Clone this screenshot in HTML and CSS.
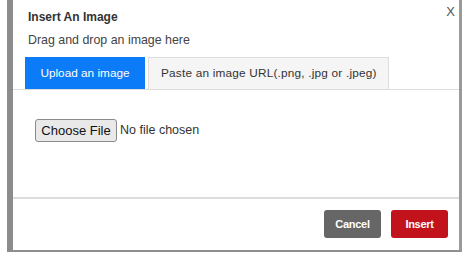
FILE: index.html
```html
<!DOCTYPE html>
<html>
<head>
<meta charset="utf-8">
<link rel="stylesheet" href="styles.css">
</head>
<body>
<div class="modal">
  <div class="header">
    <div class="title">Insert An Image</div>
    <div class="subtitle">Drag and drop an image here</div>
    <span class="close">X</span>
  </div>
  <div class="tabs">
    <div class="tab active">Upload an image</div>
    <div class="tab url">Paste an image URL(.png, .jpg or .jpeg)</div>
  </div>
  <div class="body">
    <button class="file-btn">Choose File</button>
    <span class="file-name">No file chosen</span>
  </div>
  <div class="footer">
    <button class="btn cancel">Cancel</button>
    <button class="btn insert">Insert</button>
  </div>
</div>
</body>
</html>
```
FILE: styles.css
```css
html, body {
  margin: 0;
  padding: 0;
  background: #fff;
}
body {
  font-family: "Liberation Sans", Arial, sans-serif;
  color: #333;
  width: 470px;
  height: 258px;
  overflow: hidden;
}
.modal {
  position: relative;
  margin-left: 7px;
  width: 446px;
  height: 250px;
  background: #fff;
  border-left: 6px solid #8c8c8c;
  border-right: 3px solid #9a9a9a;
  border-bottom: 2px solid #8f8f8f;
  display: flex;
  flex-direction: column;
}
.header {
  padding: 9px 15px 0 15px;
}
.title {
  font-size: 12px;
  font-weight: bold;
  line-height: 16px;
  color: #333;
}
.subtitle {
  font-size: 12.4px;
  line-height: 16px;
  margin-top: 7px;
  color: #444;
}
.close {
  position: absolute;
  top: 4px;
  right: 4px;
  font-size: 13px;
  color: #555;
}
.tabs {
  display: flex;
  gap: 3px;
  margin-top: 9px;
  padding-left: 12px;
  border-bottom: 1px solid #ddd;
}
.tab {
  height: 31px;
  line-height: 31px;
  font-size: 11.8px;
  padding: 0 12px;
  border: 1px solid #ddd;
  border-bottom: none;
  background: #f5f5f5;
  color: #333;
  white-space: nowrap;
}
.tab.url {
  width: 215px;
  letter-spacing: 0.2px;
}
.tab.active {
  background: #0b7bf7;
  border-color: #0b7bf7;
  color: #fff;
  width: 94px;
  text-align: center;
}
.body {
  flex: 1;
  display: flex;
  align-items: flex-start;
  padding: 29px 0 0 22px;
  border-bottom: 2px solid #ddd;
}
.file-btn {
  font-family: "Liberation Sans", Arial, sans-serif;
  font-size: 13px;
  height: 23px;
  width: 82px;
  padding: 0;
  color: #111;
  background: #e9e9e9;
  border: 1px solid #8a8a8a;
  border-radius: 3px;
}
.file-name {
  font-size: 12.5px;
  line-height: 23px;
  margin-left: 3px;
  color: #333;
}
.footer {
  height: 51px;
  display: flex;
  justify-content: flex-end;
  align-items: flex-start;
  gap: 10px;
  padding: 11px 11px 0 0;
  box-sizing: border-box;
}
.btn {
  font-family: "Liberation Sans", Arial, sans-serif;
  font-size: 11px;
  font-weight: bold;
  letter-spacing: -0.3px;
  color: #fff;
  width: 57px;
  height: 28px;
  border: none;
  border-radius: 3px;
  padding: 0;
}
.cancel {
  background: #666;
}
.insert {
  background: #c2121c;
}
```
